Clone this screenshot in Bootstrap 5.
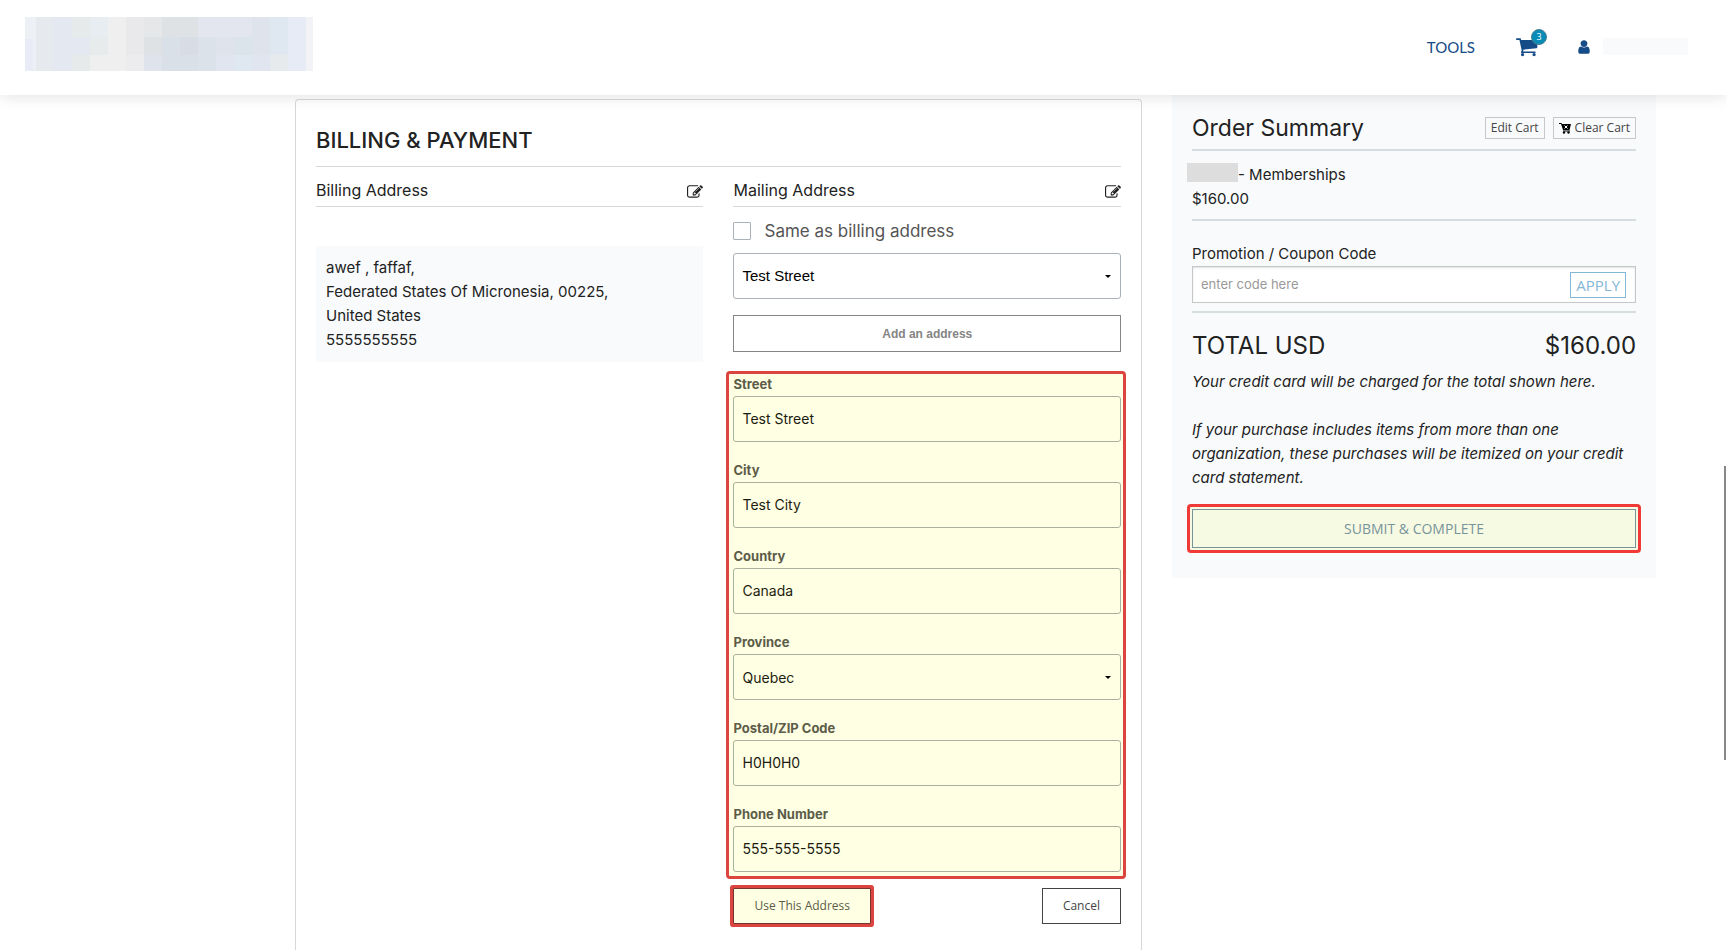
<!DOCTYPE html>
<html lang="en">
<head>
<meta charset="utf-8">
<meta name="viewport" content="width=device-width, initial-scale=1">
<title>Billing &amp; Payment</title>
<link rel="stylesheet" href="https://cdn.jsdelivr.net/npm/bootstrap@5.3.0/dist/css/bootstrap.min.css">
<style>
  :root { --ink: #222; --brand: #154b86; --line: #d6d9dc; --field: #abb1b8; --note: #dc4440; --note-bg: #ffffe4; }
  body { font: 15px/24px Inter, "Liberation Sans", sans-serif; color: var(--ink); background: #fff; }
  .ui-alt { font-family: "Open Sans", "Noto Sans", sans-serif; }
  .site-header { height: 95px; padding: 0 39px 0 25px; background: #fff; box-shadow: 0 0 16px rgba(0,0,0,.14); z-index: 5; }
  .tools-link { font: 15px/24px Lato, sans-serif; color: var(--brand); }
  .header-nav { gap: 41px; padding-bottom: 2px; }
  .cart-count { left: 15px; top: -6px; width: 16px; height: 16px; font: 9px/14px "Open Sans", sans-serif; color: #fff; background: #078cb8; border: 1px solid #4d7f91; }
  .user-name { width: 85px; height: 17px; background: #f8fafc; }
  .profile-link { gap: 11px; margin-left: -4px; }
  .page-grid { min-height: calc(100vh - 95px); display: grid; grid-template-columns: 847fr 484fr; column-gap: 30px; padding: 0 4.11% 0 17.08%; }
  .panel { margin-top: 4px; padding: 23px 20px 26px; border: 1px solid var(--line); border-bottom: 0; border-radius: 4px 4px 0 0; }
  .panel-title { font-size: 22px; line-height: 34px; font-weight: 500; padding-bottom: 9px; border-bottom: 1px solid var(--line); }
  .address-cols { display: grid; grid-template-columns: 1fr 1fr; column-gap: 30px; }
  .sub-title { font-size: 16px; line-height: 24px; font-weight: 400; }
  .sub-head { height: 40px; padding-top: 10px; border-bottom: 1px solid var(--line); }
  .icon-btn { padding: 0; border: 0; background: none; color: var(--ink); line-height: 16px; display: flex; }
  .address-box { margin-top: 39px; padding: 10px; background: #f8fafc; }
  .same-row { gap: 13px; margin: 12px 0 10px; font-size: 17px; color: #555; height: 24px; }
  .same-row .form-check-input { width: 18px; height: 18px; margin: 0; border: 1px solid var(--field); border-radius: 1px; }
  .field { height: 46px; padding: 0 8px 2px; border: 1px solid var(--field); border-radius: 3px; font-size: 14px; color: #000; background-color: transparent; }
  .field-select { font-size: 15px; font-family: "Liberation Sans", Arial, sans-serif; padding: 0 24px 0 8px;
    background-image: url("data:image/svg+xml,%3Csvg xmlns='http://www.w3.org/2000/svg' viewBox='0 0 6 3'%3E%3Cpath d='M0 0h6L3 3z'/%3E%3C/svg%3E"); background-size: 6px 3px; background-position: right 9px center; }
  .inter-select { font-family: Inter, sans-serif; font-size: 14px; }
  .flat { border-radius: 0; font-size: 12px; line-height: 18px; padding: 8px 20px; border: 1px solid #444; color: #444; }
  .add-address { margin-top: 16px; height: 37px; font-family: "Liberation Sans", Arial, sans-serif; font-weight: 700; border-color: #858585; color: #858585; }
  .marked { margin: 19px -5px 0 -7px; padding: 0 2px 4px 4px; border: 3px solid var(--note); border-radius: 4px; background: var(--note-bg); }
  .marked .field { border-color: #abb09e; color: #1c1c10; }
  .marked label { display: block; font-size: 13px; font-weight: 700; line-height: 20px; padding-bottom: 2px; color: #5c5c48; }
  .marked > div + div { margin-top: 18px; }
  .form-actions { margin-top: 9px; }
  .use-address { background: var(--note-bg); border-color: #77342a; color: #5c5c48; box-shadow: 0 0 0 3px var(--note); border-radius: 1px; }
  .summary { padding: 14px 20px 25px; background: #f8fafc; }
  .summary-title { font-size: 23px; line-height: 38px; font-weight: 400; }
  .summary-section { padding-bottom: 8px; border-bottom: 2px solid #d6dde1; }
  .summary-section.head-row { padding-bottom: 2px; }
  .btn-small { height: 22px; padding: 1px 5px; line-height: 18px; border-color: #c6c9cb; font-size: 12px; font-weight: 500; }
  .org-name { width: 51px; height: 19px; margin-left: -5px; background: #dddddd; }
  .coupon-label { padding-top: 21px; }
  .coupon { height: 37px; padding: 0 9px 0 0; background: #fff; border: 1px solid #c5c8c9; box-shadow: inset 0 1px 2px rgba(0,0,0,.12); }
  .coupon input { border: 0; outline: 0; background: none; padding: 0 8px 2px; font-size: 13px; }
  .coupon input::placeholder { color: #999; }
  .apply { height: 26px; padding: 0 5px; line-height: 22px; font-size: 15px; font-weight: 500; border-color: #84b7d5; color: #84b7d5; }
  .total-row { font-size: 24px; line-height: 32px; margin-top: 17px; }
  .submit-mark { margin: 14px -5px 0; padding: 2px; border: 3px solid #f03a38; border-radius: 4px; background: #f7fae2; }
  .submit { height: 39px; font-size: 14px; color: #78949b; border-color: #78949b; }
  .scroll-thumb { right: 1px; top: 49%; width: 2px; height: 31%; background: #858789; }
</style>
</head>
<body>
<header class="site-header d-flex align-items-center justify-content-between position-relative">
  <svg class="mb-2" width="288" height="54" viewBox="0 0 288 54" role="img" aria-label="Logo" shape-rendering="crispEdges">
    <path fill="#e6eaee" d="M0 0h288v54H0z"/>
    <path fill="#edf1f5" d="M0 0h11v54H0z"/><path fill="#e9ecf7" d="M0 22h8v32H0z"/>
    <path fill="#e4e8f0" d="M29 0h18v54H29z"/><path fill="#e4e8f1" d="M47 20h18v18H47z"/><path fill="#e6eaeb" d="M47 0h18v20H47zM47 38h18v16H47z"/>
    <path fill="#e8edf1" d="M65 0h18v20H65z"/><path fill="#e7ebec" d="M65 20h18v18H65z"/>
    <path fill="#efefef" d="M83 0h18v54H83zM65 38h54v16H65z"/><path fill="#e9e9ec" d="M101 0h18v38h-18z"/><path fill="#ececee" d="M101 38h18v16h-18z"/>
    <path fill="#e6e7e9" d="M119 0h18v20h-18z"/><path fill="#dfe2e5" d="M119 20h18v18h-18zM137 0h36v20h-36z"/><path fill="#dfe3eb" d="M119 38h18v16h-18z"/>
    <path fill="#dae0e8" d="M137 20h54v34h-54z"/><path fill="#d7dce5" d="M155 20h18v18h-18z"/><path fill="#dbe2e9" d="M173 20h18v34h-18z"/>
    <path fill="#e3e6ef" d="M173 0h54v20h-54z"/><path fill="#dfe3ec" d="M191 20h18v18h-18zM227 0h18v38h-18z"/><path fill="#dbe3eb" d="M209 20h18v18h-18z"/>
    <path fill="#e1e5ef" d="M191 38h54v16h-54z"/><path fill="#dfe7f0" d="M209 38h18v16h-18zM245 0h18v38h-18z"/><path fill="#e6eaec" d="M245 38h18v16h-18z"/>
    <path fill="#e7ebf5" d="M263 0h18v54h-18z"/><path fill="#f2f2f7" d="M281 0h7v54h-7z"/>
  </svg>
  <nav class="header-nav d-flex align-items-center" aria-label="Account">
    <a class="tools-link text-decoration-none" href="#">TOOLS</a>
    <a class="position-relative d-flex" href="#" aria-label="Cart">
      <svg width="23" height="23" viewBox="0 0 1792 1792" fill="#154b86"><path d="M640 1536q0 52-38 90t-90 38-90-38-38-90 38-90 90-38 90 38 38 90zm896 0q0 52-38 90t-90 38-90-38-38-90 38-90 90-38 90 38 38 90zm128-1088v512q0 24-16.500 42.500t-40.500 21.500l-1044 122q13 60 13 70 0 16-24 64h920q26 0 45 19t19 45-19 45-45 19h-1024q-26 0-45-19t-19-45q0-11 8-31.500t16-36 21.500-40 15.500-29.500l-177-823h-204q-26 0-45-19t-19-45 19-45 45-19h256q16 0 28.500 6.500t19.500 15.500 13 24.500 8 26 5.500 29.500 4.500 26h1201q26 0 45 19t19 45z"/></svg>
      <span class="cart-count position-absolute rounded-circle text-center">3</span>
    </a>
    <a class="profile-link d-flex align-items-center text-decoration-none" href="#" aria-label="Profile">
      <svg width="16" height="16" viewBox="0 0 1792 1792" fill="#154b86"><path d="M1536 1399q0 109-62.500 187t-150.500 78h-854q-88 0-150.500-78t-62.500-187q0-85 8.500-160.500t31.500-152 58.500-131 94-89 134.500-34.500q131 128 313 128t313-128q76 0 134.500 34.500t94 89 58.500 131 31.500 152 8.500 160.500zm-256-887q0 159-112.500 271.500t-271.500 112.500-271.500-112.500-112.500-271.500 112.500-271.500 271.500-112.500 271.500 112.500 112.500 271.500z"/></svg>
      <span class="user-name"></span>
    </a>
  </nav>
</header>

<svg class="d-none">
  <symbol id="edit" viewBox="0 0 1792 1792"><path d="M888 1184l116-116-152-152-116 116v56h96v96h56zm440-720q-16-16-33 1l-350 350q-17 17-1 33t33-1l350-350q17-17 1-33zm80 594v190q0 119-84.500 203.500t-203.500 84.500h-832q-119 0-203.500-84.500t-84.500-203.500v-832q0-119 84.500-203.500t203.500-84.500h832q63 0 117 25 15 7 18 23 3 17-9 29l-49 49q-14 14-32 8-23-6-45-6h-832q-66 0-113 47t-47 113v832q0 66 47 113t113 47h832q66 0 113-47t47-113v-126q0-13 9-22l64-64q15-15 35-7t20 29zm-96-738l288 288-672 672h-288v-288zm444 132l-92 92-288-288 92-92q28-28 68-28t68 28l152 152q28 28 28 68t-28 68z"/></symbol>
</svg>

<main class="page-grid">
  <section class="panel">
    <h1 class="panel-title m-0">BILLING &amp; PAYMENT</h1>
    <div class="address-cols">
      <div>
        <div class="sub-head d-flex justify-content-between align-items-center">
          <h2 class="sub-title m-0 pb-1">Billing Address</h2>
          <button type="button" class="icon-btn" aria-label="Edit billing address"><svg width="16" height="16" fill="currentColor"><use href="#edit"/></svg></button>
        </div>
        <div class="address-box">awef , faffaf,<br>Federated States Of Micronesia, 00225,<br>United States<br>5555555555</div>
      </div>
      <div>
        <div class="sub-head d-flex justify-content-between align-items-center">
          <h2 class="sub-title m-0 pb-1">Mailing Address</h2>
          <button type="button" class="icon-btn" aria-label="Edit mailing address"><svg width="16" height="16" fill="currentColor"><use href="#edit"/></svg></button>
        </div>
        <div class="same-row d-flex align-items-center">
          <input class="form-check-input" type="checkbox" id="same">
          <label for="same">Same as billing address</label>
        </div>
        <select class="form-select field field-select" aria-label="Saved address"><option>Test Street</option></select>
        <button type="button" class="btn flat add-address w-100">Add an address</button>
        <div class="marked">
          <div><label for="street">Street</label><input class="form-control field" id="street" value="Test Street"></div>
          <div><label for="city">City</label><input class="form-control field" id="city" value="Test City"></div>
          <div><label for="country">Country</label><input class="form-control field" id="country" value="Canada"></div>
          <div><label for="province">Province</label><select class="form-select field field-select inter-select" id="province"><option>Quebec</option></select></div>
          <div><label for="zip">Postal/ZIP Code</label><input class="form-control field" id="zip" value="H0H0H0"></div>
          <div><label for="phone">Phone Number</label><input class="form-control field" id="phone" type="tel" value="555-555-5555"></div>
        </div>
        <div class="form-actions d-flex justify-content-between">
          <button type="button" class="btn flat ui-alt use-address">Use This Address</button>
          <button type="button" class="btn flat ui-alt">Cancel</button>
        </div>
      </div>
    </div>
  </section>

  <aside class="summary align-self-start">
    <div class="summary-section head-row d-flex align-items-center">
      <h2 class="summary-title m-0 me-auto">Order Summary</h2>
      <button type="button" class="btn flat ui-alt btn-small">Edit Cart</button>
      <button type="button" class="btn flat ui-alt btn-small d-flex align-items-center ms-2">
        <svg class="me-1" width="12" height="12" viewBox="0 0 12 12"><path fill="#000" d="M0 1h2.500l.5 1h9l-1.500 6H4L2 2H0zM4 8.500h7v1H4z"/><circle cx="5" cy="10.500" r="1.200"/><circle cx="9.500" cy="10.500" r="1.200"/><path stroke="#fff" d="M5.500 3.500l3 3m0-3l-3 3"/></svg>Clear Cart
      </button>
    </div>
    <div class="summary-section pt-2">
      <div class="d-flex mt-1"><span class="org-name"></span><span>- Memberships</span></div>
      <div>$160.00</div>
    </div>
    <div class="summary-section pb-2">
      <label class="coupon-label d-block" for="coupon">Promotion / Coupon Code</label>
      <div class="coupon d-flex align-items-center">
        <input class="flex-grow-1" id="coupon" placeholder="enter code here">
        <button type="button" class="btn flat ui-alt apply">APPLY</button>
      </div>
    </div>
    <div class="total-row d-flex justify-content-between"><span>TOTAL USD</span><span>$160.00</span></div>
    <p class="fst-italic mt-2 mb-4">Your credit card will be charged for the total shown here.</p>
    <p class="fst-italic m-0">If your purchase includes items from more than one organization, these purchases will be itemized on your credit card statement.</p>
    <div class="submit-mark"><button type="button" class="btn flat ui-alt submit w-100">SUBMIT &amp; COMPLETE</button></div>
  </aside>
</main>
<div class="scroll-thumb position-fixed"></div>
<script src="https://cdn.jsdelivr.net/npm/bootstrap@5.3.0/dist/js/bootstrap.bundle.min.js"></script>
</body>
</html>
